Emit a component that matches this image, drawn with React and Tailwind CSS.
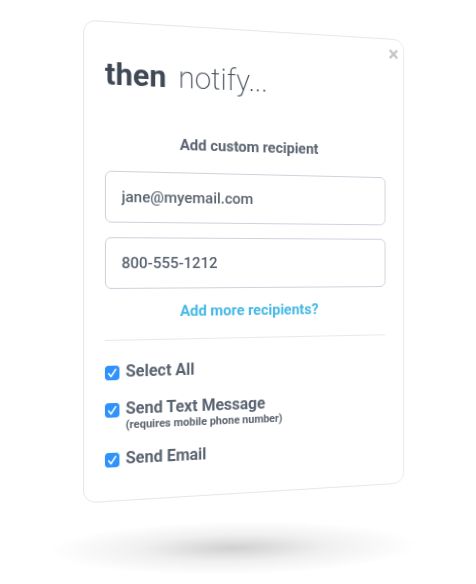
import React, { useState } from 'react';
import { FaTimes } from 'react-icons/fa';

const options = [
  { id: 'all', label: 'Select All' },
  { id: 'text', label: 'Send Text Message', note: '(requires mobile phone number)' },
  { id: 'email', label: 'Send Email' },
];

function Recipient({ label, type, defaultValue }) {
  return (
    <input
      type={type}
      aria-label={label}
      defaultValue={defaultValue}
      className="h-[50px] w-full rounded-md border border-[#cfd2dc] bg-white px-[15px] text-[15px] font-medium text-[#5a6370] outline-none focus:border-[#45b8e6]"
    />
  );
}

function Option({ id, label, note, checked, onChange }) {
  return (
    <label htmlFor={id} className="flex cursor-pointer items-start gap-1.5">
      <span className="mt-1 grid size-3.5 shrink-0">
        <input
          id={id}
          type="checkbox"
          checked={checked}
          onChange={onChange}
          className="peer col-start-1 row-start-1 size-3.5 appearance-none rounded-[3px] border border-[#a9b0bb] bg-white checked:border-[#3093fb] checked:bg-[#3093fb]"
        />
        <svg
          viewBox="0 0 14 14"
          className="pointer-events-none invisible col-start-1 row-start-1 size-3.5 peer-checked:visible"
          fill="none"
          stroke="white"
          strokeWidth="1.5"
          strokeLinecap="round"
          strokeLinejoin="round"
        >
          <path d="M3.6 7.6 5.9 10.4 10.4 3.6" />
        </svg>
      </span>
      <span className="flex flex-col">
        <span className="text-base leading-5 font-bold">{label}</span>
        {note && <span className="text-[11px] leading-3 font-bold">{note}</span>}
      </span>
    </label>
  );
}

export default function App() {
  const [checked, setChecked] = useState({ all: true, text: true, email: true });

  const toggle = (id) => {
    if (id === 'all') {
      const next = !checked.all;
      setChecked({ all: next, text: next, email: next });
      return;
    }
    const next = { ...checked, [id]: !checked[id] };
    setChecked({ ...next, all: next.text && next.email });
  };

  return (
    <main className="flex min-h-screen flex-col items-center bg-white pt-[30px] font-['Roboto','Open_Sans',sans-serif]">
      <div className="flex w-full justify-center pl-[25px] perspective-[1000px]">
        <section className="relative w-full max-w-[333px] rotate-y-15 rounded-xl border border-[#e6e8ee] bg-white px-5 pt-[30px] pb-[30px] text-[#5a6370]">
          <button
            type="button"
            aria-label="Close"
            className="absolute top-2 right-1 cursor-pointer text-sm text-[#c6c6c6]"
          >
            <FaTimes />
          </button>

          <h1 className="flex gap-3 text-[30px] leading-10 font-extralight text-[#3f4855]">
            <strong className="font-bold">then</strong>
            <span>notify...</span>
          </h1>

          <h2 className="mt-9 text-center text-[15px] leading-5 font-bold">Add custom recipient</h2>
          <div className="mt-[17px] flex flex-col gap-3.5">
            <Recipient label="Email" type="email" defaultValue="jane@myemail.com" />
            <Recipient label="Phone" type="tel" defaultValue="800-555-1212" />
          </div>
          <p className="mt-3 text-center text-[15px] leading-5 font-bold">
            <a href="#more" className="text-[#45b8e6]">Add more recipients?</a>
          </p>

          <hr className="mt-[17px] mb-5 border-[#e6e8ee]" />

          <div className="flex flex-col gap-4">
            {options.map((option) => (
              <Option
                key={option.id}
                {...option}
                checked={checked[option.id]}
                onChange={() => toggle(option.id)}
              />
            ))}
          </div>
        </section>
      </div>

      {/* Floor shadow */}
      <div className="mt-7 mr-2 h-[54px] w-[78%] -rotate-1 bg-[radial-gradient(closest-side,rgba(0,0,0,0.18),rgba(0,0,0,0.06)_50%,transparent)]" />
    </main>
  );
}
